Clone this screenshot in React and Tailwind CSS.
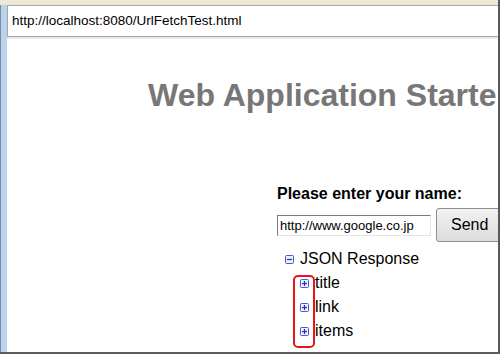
import React from 'react';

const Box = ({ minus }) => (
    <svg width="9" height="9" viewBox="0 0 9 9" className="shrink-0">
        <rect x="0.5" y="0.5" width="8" height="8" rx="1" fill="#eef0ff" stroke="#4a5acb" />
        <path d="M2 4.5h5" stroke="#1f2fb0" strokeWidth="1.2" />
        {!minus && <path d="M4.5 2v5" stroke="#1f2fb0" strokeWidth="1.2" />}
    </svg>
);

const App = () => {
    return (
        <div className="w-[500px] h-[354px] overflow-hidden bg-white flex flex-col border-r-2 border-b-2 border-[#5a5a5a]" style={{ fontFamily: '"Liberation Sans", Arial, sans-serif' }}>
            {/* Window top strip */}
            <div className="h-[5px] bg-[#ece9d8] shrink-0"></div>

            <div className="flex flex-1 min-h-0">
                {/* Left frame strip */}
                <div className="w-[7px] shrink-0 bg-[#bcd3ee] border-l border-[#7a8aa0]"></div>

                <div className="flex-1 flex flex-col min-w-0">
                    {/* Address bar */}
                    <div className="h-[32px] shrink-0 border-y border-l border-[#a5a5a5] flex items-center pl-[4px] text-[13.5px] text-black">
                        http://localhost:8080/UrlFetchTest.html
                    </div>
                    <div className="h-[2px] bg-[#e8e8ec] shrink-0"></div>

                    {/* Page content */}
                    <div className="flex-1 whitespace-nowrap overflow-hidden">
                        <h1 className="pl-[141px] pt-[40px] text-[32px] font-bold text-[#777777] leading-none">
                            Web Application Starter Project
                        </h1>

                        <div className="pl-[270px] pt-[75px]">
                            <p className="text-[16px] font-bold text-black leading-none">Please enter your name:</p>
                            <div className="flex items-center gap-[5px] mt-[6px]">
                                <input
                                    readOnly
                                    value="http://www.google.co.jp"
                                    className="w-[154px] h-[21px] border border-t-[#7a7a7a] border-l-[#7a7a7a] border-r-[#e3e3e3] border-b-[#e3e3e3] px-[2px] text-[13px] text-black outline-none"
                                />
                                <div className="w-[70px] h-[34px] shrink-0 border border-[#8e8f8f] rounded-[3px] bg-gradient-to-b from-[#f2f2f2] to-[#dcdcdc] flex items-center pl-[14px] text-[16px] text-black">
                                    Send
                                </div>
                            </div>

                            <div className="mt-[5px] ml-[8px] text-[16px] text-black leading-[24px]">
                                <div className="flex items-center gap-[6px]">
                                    <Box minus />
                                    <span>JSON Response</span>
                                </div>
                                <div className="relative ml-[15px]">
                                    <div className="absolute left-[-7px] top-[4px] w-[22px] h-[73px] border-2 border-[#e8141c] rounded-[5px]"></div>
                                    {['title', 'link', 'items'].map(item => (
                                        <div key={item} className="flex items-center gap-[6px]">
                                            <Box />
                                            <span>{item}</span>
                                        </div>
                                    ))}
                                </div>
                            </div>
                        </div>
                    </div>
                </div>
            </div>
        </div>
    );
};

export default App;
